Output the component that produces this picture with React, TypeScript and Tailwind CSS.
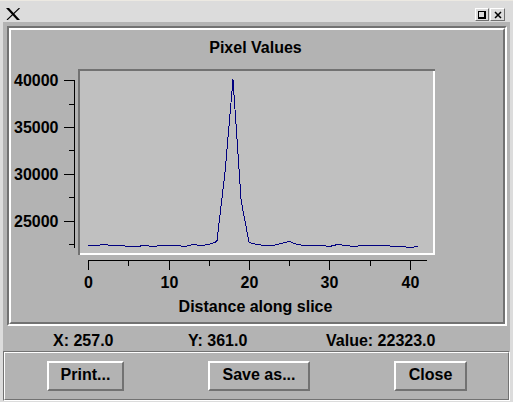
import React from 'react';

// pixel rows of the trace, one per slice position (0..41)
const trace = [
  245, 245, 244, 245, 245, 246, 246, 245, 246, 245, 245, 245, 246, 244, 245, 244, 241, 172, 79, 200, 242,
  244, 245, 245, 243, 241, 244, 245, 245, 245, 246, 244, 245, 246, 245, 245, 245, 245, 246, 246, 247, 246,
];

const yTicks = [
  { y: 80, label: '40000' },
  { y: 104 },
  { y: 127, label: '35000' },
  { y: 150 },
  { y: 174, label: '30000' },
  { y: 197 },
  { y: 221, label: '25000' },
  { y: 244 },
];

const xTicks = [
  { x: 88, label: '0' },
  { x: 128 },
  { x: 169, label: '10' },
  { x: 209 },
  { x: 249, label: '20' },
  { x: 289 },
  { x: 329, label: '30' },
  { x: 370 },
  { x: 410, label: '40' },
];

const font = "'Liberation Sans', Arial, sans-serif";

function Chart() {
  const pts = trace.map((y, i) => `${(88.3 + i * 8.04).toFixed(1)},${y + 0.5}`).join(' ');
  return (
    <svg width={492} height={292} viewBox="11 30 492 292" className="block">
      <text x={255.5} y={53} textAnchor="middle" fontFamily={font} fontWeight="bold" fontSize={16} fill="#000">
        Pixel Values
      </text>

      {/* plot box */}
      <rect x={78} y={69} width={357} height={186} fill="#c0c0c0" />
      <rect x={78} y={69} width={357} height={2} fill="#727272" />
      <rect x={78} y={69} width={2} height={186} fill="#727272" />
      <rect x={80} y={253} width={355} height={2} fill="#ffffff" />
      <rect x={433} y={71} width={2} height={184} fill="#ffffff" />

      <polyline points={pts} fill="none" stroke="#000080" strokeWidth={1} shapeRendering="crispEdges" />

      {/* y axis */}
      <g stroke="#000" strokeWidth={1} shapeRendering="crispEdges">
        <line x1={74.5} y1={80} x2={74.5} y2={248} />
        {yTicks.map((t) => (
          <line key={t.y} x1={t.label ? 64 : 69} y1={t.y + 0.5} x2={75} y2={t.y + 0.5} />
        ))}
        <line x1={88} y1={260.5} x2={427} y2={260.5} />
        {xTicks.map((t) => (
          <line key={t.x} x1={t.x + 0.5} y1={260} x2={t.x + 0.5} y2={t.label ? 270 : 266} />
        ))}
      </g>
      <g fontFamily={font} fontWeight="bold" fontSize={16} fill="#000">
        {yTicks
          .filter((t) => t.label)
          .map((t) => (
            <text key={t.y} x={58.5} y={t.y + 6} textAnchor="end">
              {t.label}
            </text>
          ))}
        {xTicks
          .filter((t) => t.label)
          .map((t) => (
            <text key={t.x} x={t.x + 0.5} y={288} textAnchor="middle">
              {t.label}
            </text>
          ))}
        <text x={255.5} y={312} textAnchor="middle">
          Distance along slice
        </text>
      </g>
    </svg>
  );
}

function Button({ label, className }: { label: string; className: string }) {
  return (
    <button
      className={`h-[30px] flex items-center justify-center pb-[2px] bg-[#b3b3b3] border-2 border-t-white border-l-white border-b-[#727272] border-r-[#727272] text-[16px] font-bold text-black ${className}`}
    >
      {label}
    </button>
  );
}

export default function App() {
  return (
    <div className="w-[513px] h-[402px] bg-[#dcdcdc] border-t border-[#ece9e2] flex flex-col font-['Liberation_Sans',Arial,sans-serif] overflow-hidden">
      {/* title bar */}
      <div className="h-[21px] shrink-0 flex items-start justify-between pl-[6px] pr-[8px] pt-[7px]">
        <svg width={15} height={12} viewBox="0 0 15 12">
          <polygon points="0,0 3,0 14,12 11,12" fill="#000" />
          <line x1={13.5} y1={0} x2={1} y2={12} stroke="#000" strokeWidth={1.1} />
        </svg>
        <div className="flex gap-[1px]">
          <div className="w-[14px] h-[13px] flex items-center justify-center border border-t-white border-l-white border-b-[#707070] border-r-[#707070]">
            <div className="w-[8px] h-[8px] border border-black border-r-2 border-b-2" />
          </div>
          <div className="w-[15px] h-[13px] flex items-center justify-center border border-t-white border-l-white border-b-[#707070] border-r-[#707070]">
            <svg width={8} height={8} viewBox="0 0 8 8">
              <path d="M1 1 L7 7 M7 1 L1 7" stroke="#000" strokeWidth={1.5} />
            </svg>
          </div>
        </div>
      </div>

      {/* window body */}
      <div className="mx-[3px] h-[379px] bg-[#b3b3b3] flex flex-col text-black">
        <div className="ml-[4px] mr-[3px] mt-[4px] h-[300px] border-2 border-t-[#727272] border-l-[#727272] border-b-white border-r-white">
          <div className="h-full border-2 border-t-white border-l-white border-b-[#727272] border-r-[#727272]">
            <Chart />
          </div>
        </div>

        <div className="h-[25px] pt-[4px] flex items-center pl-[50px] text-[16px] font-bold leading-none">
          <span className="w-[135px]">X: 257.0</span>
          <span className="w-[138px]">Y: 361.0</span>
          <span>Value: 22323.0</span>
        </div>

        <div className="h-[50px] border border-t-[#727272] border-l-[#727272] border-b-white border-r-white">
          <div className="h-full border border-t-white border-l-white border-b-[#727272] border-r-[#727272] flex items-center justify-between pl-[42px] pr-[41px]">
            <Button label="Print..." className="w-[77px]" />
            <Button label="Save as..." className="w-[102px]" />
            <Button label="Close" className="w-[73px]" />
          </div>
        </div>
      </div>
    </div>
  );
}
